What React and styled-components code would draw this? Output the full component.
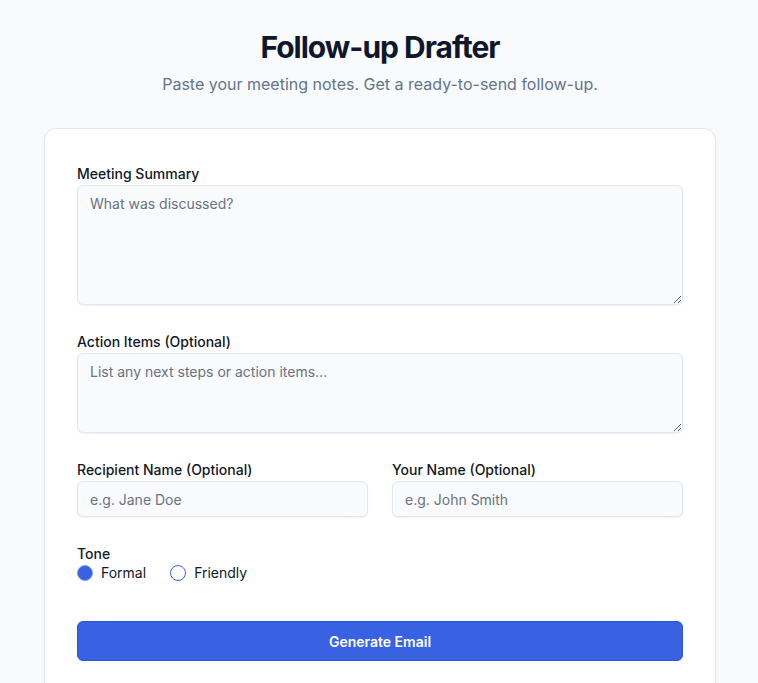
import React, { useState } from "react";
import styled, { createGlobalStyle } from "styled-components";

const GlobalStyle = createGlobalStyle`
  * { box-sizing: border-box; }
  body {
    margin: 0;
    background: #f8fafc;
    font-family: Inter, "Noto Sans", "Liberation Sans", sans-serif;
    color: #0f172a;
  }
`;

const Page = styled.main`
  max-width: 674px;
  margin: 0 auto;
  padding: 29px 0 40px 2px;
`;

const Header = styled.header`
  text-align: center;
  margin-bottom: 32px;
`;

const Title = styled.h1`
  margin: 0;
  font-size: 30px;
  line-height: 36px;
  font-weight: 700;
  color: #0f172a;
  letter-spacing: -1px;
`;

const Subtitle = styled.p`
  margin: 7px 0 0;
  font-size: 16px;
  line-height: 24px;
  color: #64748b;
`;

const Card = styled.form`
  background: #ffffff;
  border: 1px solid #e5e7eb;
  border-radius: 12px;
  padding: 35px 32px 32px;
  box-shadow: 0 1px 2px rgba(15, 23, 42, 0.04);
  display: flex;
  flex-direction: column;
`;

const Field = styled.div`
  display: flex;
  flex-direction: column;
  margin-bottom: ${(p) => p.$mb ?? 27}px;
`;

const Label = styled.label`
  display: block;
  font-size: 14px;
  line-height: 20px;
  font-weight: 500;
  color: #111827;
  margin-bottom: 1px;
`;

const fieldBase = `
  width: 100%;
  background: #f8fafc;
  border: 1px solid #e2e8f0;
  border-radius: 6px;
  box-shadow: 0 1px 2px rgba(15, 23, 42, 0.06);
  font-family: Inter, "Noto Sans", "Liberation Sans", sans-serif;
  font-size: 14px;
  color: #0f172a;
  outline: none;
  &::placeholder { color: #6b7280; }
`;

const TextArea = styled.textarea`
  ${fieldBase}
  height: ${(p) => p.$h}px;
  padding: 8px 12px;
  line-height: 20px;
  resize: vertical;
  display: block;
`;

const Input = styled.input`
  ${fieldBase}
  height: 36px;
  padding: 0 12px;
`;

const Row = styled.div`
  display: grid;
  grid-template-columns: 1fr 1fr;
  gap: 24px;
  margin-bottom: 27px;
`;

const ToneGroup = styled.div`
  display: flex;
  flex-direction: column;
  margin-bottom: 39px;
`;

const ToneLabel = styled.span`
  font-size: 14px;
  line-height: 20px;
  font-weight: 500;
  color: #111827;
`;

const Radios = styled.div`
  display: flex;
  align-items: center;
  gap: 24px;
  height: 18px;
`;

const RadioOption = styled.label`
  display: flex;
  align-items: center;
  gap: 8px;
  font-size: 14px;
  line-height: 18px;
  color: #111827;
  cursor: pointer;
`;

const Radio = styled.input.attrs({ type: "radio" })`
  appearance: none;
  margin: 0;
  width: 16px;
  height: 16px;
  border-radius: 50%;
  border: 1.5px solid #3d66e4;
  background: #ffffff;
  cursor: pointer;
  &:checked {
    background: #3862e2;
    border-color: #7f99ee;
  }
`;

const Button = styled.button`
  height: 40px;
  width: 100%;
  border: 1px solid #2f56d2;
  border-radius: 6px;
  background: #3862e2;
  color: #ffffff;
  font-family: Inter, "Noto Sans", "Liberation Sans", sans-serif;
  font-size: 14px;
  font-weight: 600;
  cursor: pointer;
`;

const Spacer = styled.div`
  height: 40px;
`;

export default function App() {
  const [tone, setTone] = useState("formal");
  return (
    <>
      <GlobalStyle />
      <Page>
        <Header>
          <Title>Follow-up Drafter</Title>
          <Subtitle>Paste your meeting notes. Get a ready-to-send follow-up.</Subtitle>
        </Header>
        <Card onSubmit={(e) => e.preventDefault()}>
          <Field>
            <Label htmlFor="summary">Meeting Summary</Label>
            <TextArea id="summary" $h={120} placeholder="What was discussed?" />
          </Field>
          <Field>
            <Label htmlFor="actions">Action Items (Optional)</Label>
            <TextArea id="actions" $h={80} placeholder="List any next steps or action items..." />
          </Field>
          <Row>
            <Field $mb={0}>
              <Label htmlFor="recipient">Recipient Name (Optional)</Label>
              <Input id="recipient" placeholder="e.g. Jane Doe" />
            </Field>
            <Field $mb={0}>
              <Label htmlFor="sender">Your Name (Optional)</Label>
              <Input id="sender" placeholder="e.g. John Smith" />
            </Field>
          </Row>
          <ToneGroup>
            <ToneLabel>Tone</ToneLabel>
            <Radios>
              <RadioOption>
                <Radio name="tone" checked={tone === "formal"} onChange={() => setTone("formal")} />
                Formal
              </RadioOption>
              <RadioOption>
                <Radio name="tone" checked={tone === "friendly"} onChange={() => setTone("friendly")} />
                Friendly
              </RadioOption>
            </Radios>
          </ToneGroup>
          <Button type="submit">Generate Email</Button>
          <Spacer />
        </Card>
      </Page>
    </>
  );
}
